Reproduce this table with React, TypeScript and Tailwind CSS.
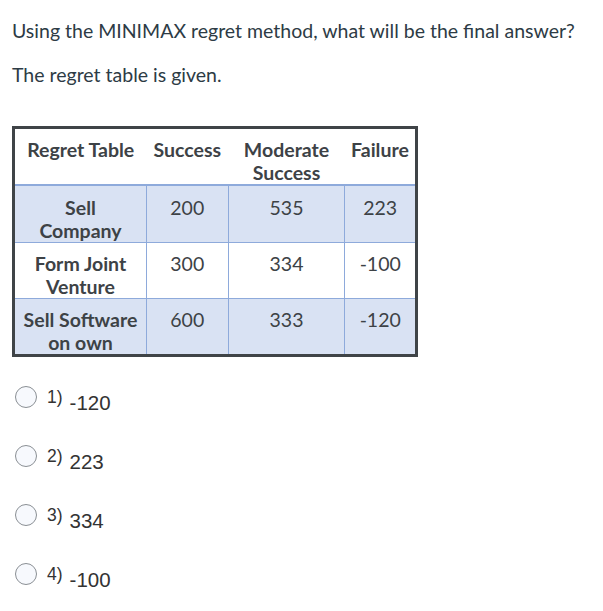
import React from "react";

const rows = [
  { name: ["Sell", "Company"], v: ["200", "535", "223"], blue: true },
  { name: ["Form Joint", "Venture"], v: ["300", "334", "-100"], blue: false },
  { name: ["Sell Software", "on own"], v: ["600", "333", "-120"], blue: true },
];

const options = [
  ["1)", "-120"],
  ["2)", "223"],
  ["3)", "334"],
  ["4)", "-100"],
];

export default function App() {
  return (
    <div
      className="w-[603px] h-[611px] bg-white pl-[12px] text-[#2d3b45]"
      style={{ fontFamily: "Lato, 'Liberation Sans', sans-serif" }}
    >
      <p className="pt-[19px] text-[19.5px] leading-[24px]">
        Using the MINIMAX regret method, what will be the final answer?
      </p>
      <p className="mt-[20px] text-[19.5px] leading-[24px]">The regret table is given.</p>

      <table className="mt-[39px] w-[406px] border-[3px] border-[#3f4447] border-collapse text-[19.5px] leading-[23px] text-[#3d4246] table-fixed">
        <colgroup>
          <col className="w-[132px]" />
          <col className="w-[81px]" />
          <col className="w-[116px]" />
          <col className="w-[71px]" />
        </colgroup>
        <thead>
          <tr className="h-[53px] border-b-2 border-[#8eaadb]">
            <th className="align-top pt-[9px] font-bold">Regret Table</th>
            <th className="align-top pt-[9px] font-bold">Success</th>
            <th className="align-top pt-[9px] font-bold">
              Moderate
              <br />
              Success
            </th>
            <th className="align-top pt-[9px] font-bold">Failure</th>
          </tr>
        </thead>
        <tbody>
          {rows.map((r, i) => {
            const pad = i === 0 ? "pt-[10px]" : "pt-[9px]";
            return (
              <tr
                key={i}
                className={`${i === 0 ? "h-[55px]" : "h-[53px]"} ${r.blue ? "bg-[#d9e2f3]" : "bg-white"} ${i < 2 ? "border-b border-[#8eaadb]" : ""}`}
              >
                <td className={`align-top ${pad} text-center font-bold border-r border-[#8eaadb]`}>
                  {r.name[0]}
                  <br />
                  {r.name[1]}
                </td>
                {r.v.map((v, j) => (
                  <td
                    key={j}
                    className={`align-top ${pad} text-center ${j < 2 ? "border-r border-[#8eaadb]" : ""}`}
                  >
                    {v}
                  </td>
                ))}
              </tr>
            );
          })}
        </tbody>
      </table>

      <div className="mt-[29px] flex flex-col gap-[37px] pl-[3px]">
        {options.map(([n, v]) => (
          <div key={n} className="flex items-start h-[22px]">
            <span className="w-[22px] h-[22px] rounded-full border border-[#8a8f94] bg-[#f7f9fd] shrink-0" />
            <span
              className="ml-[10px] text-[17.5px] leading-[22px] text-[#333]"
              style={{ fontFamily: "'Liberation Sans', Arial, sans-serif" }}
            >
              {n}
            </span>
            <span
              className="ml-[7px] pt-[6px] text-[20.5px] leading-[22px] text-[#333]"
              style={{ fontFamily: "'Liberation Sans', Arial, sans-serif" }}
            >
              {v}
            </span>
          </div>
        ))}
      </div>
    </div>
  );
}
